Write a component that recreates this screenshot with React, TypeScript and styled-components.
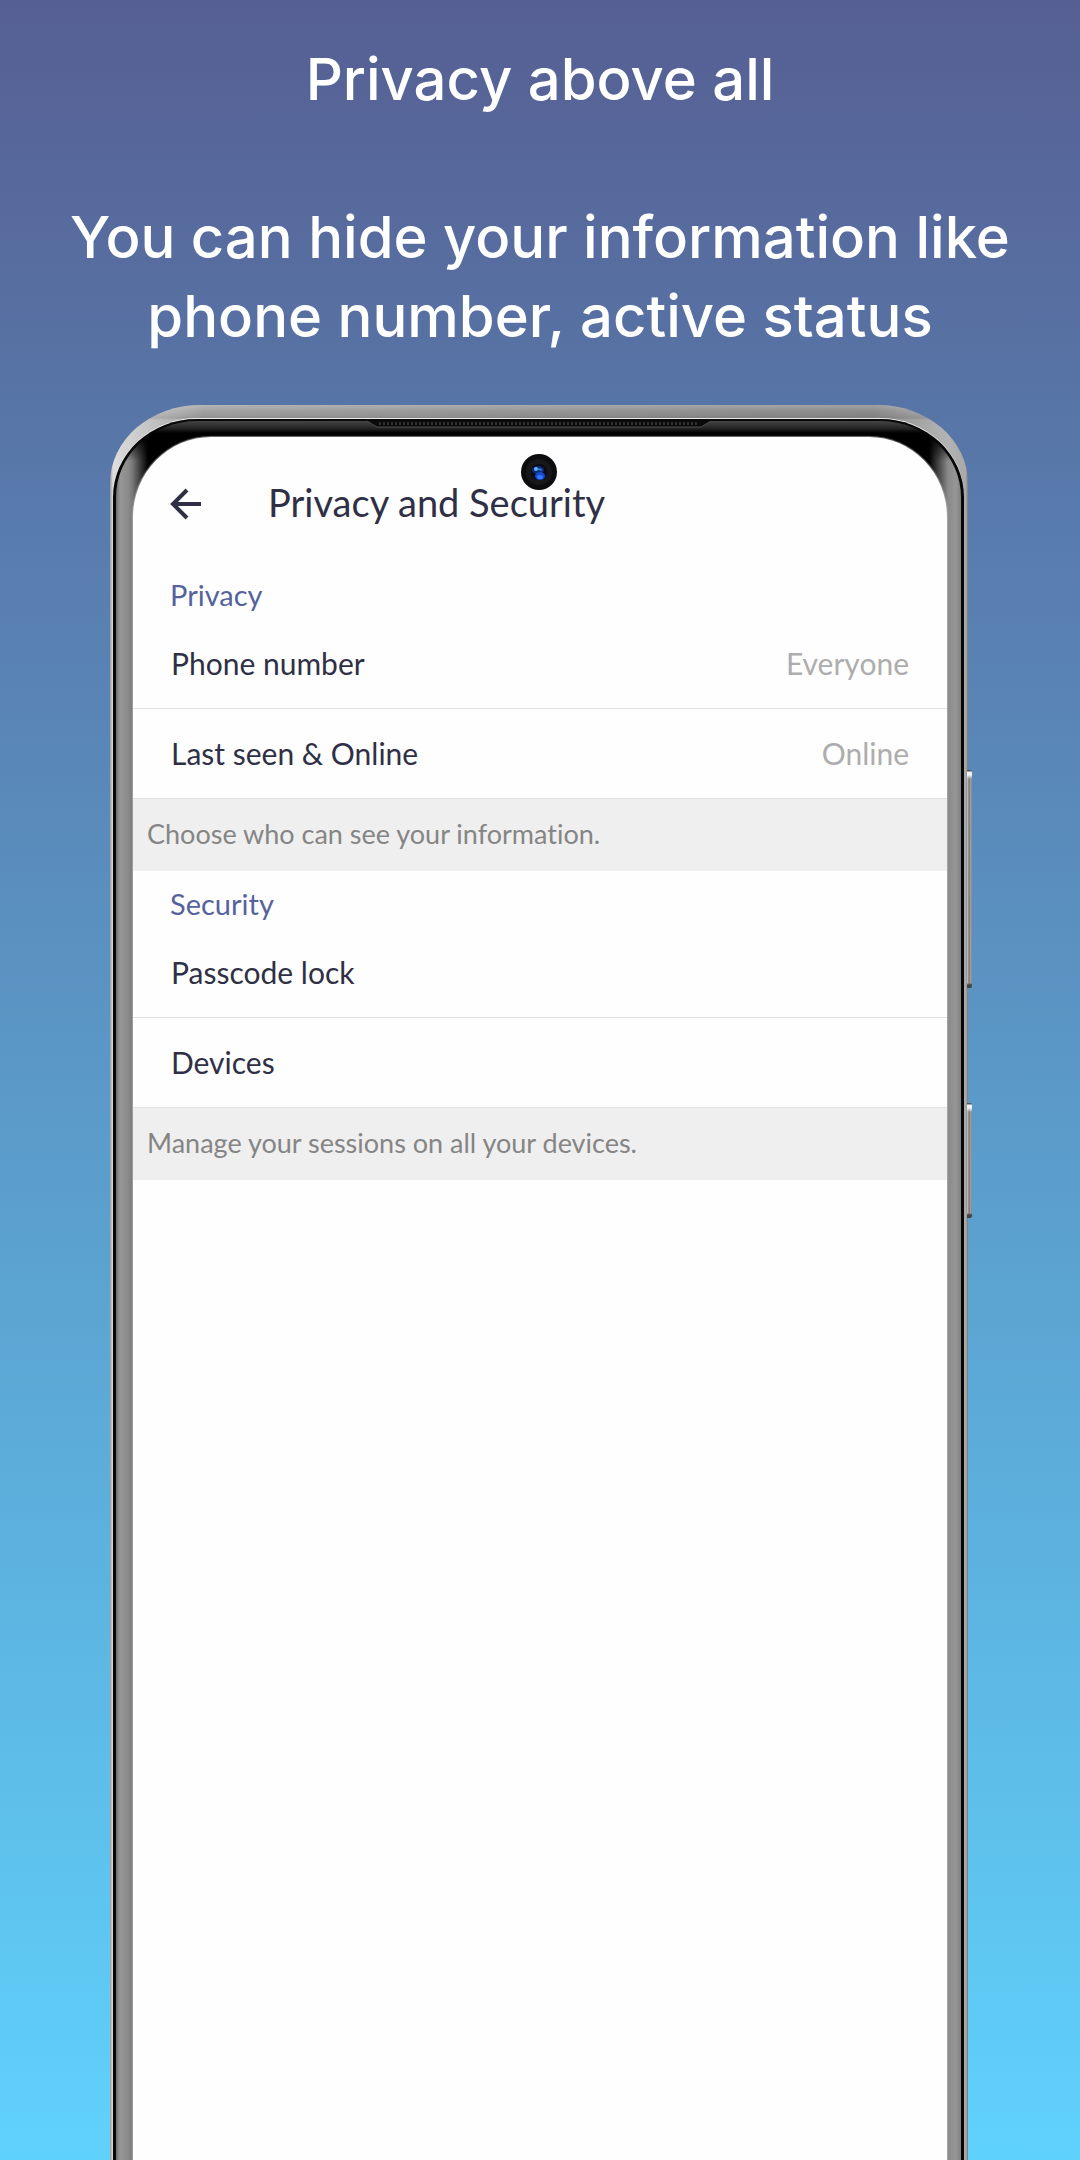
import React from 'react';
import styled, { createGlobalStyle } from 'styled-components';

const GlobalStyle = createGlobalStyle`
  *, *::before, *::after { box-sizing: border-box; }
  body { margin: 0; }
  h1, h2, h3, p { margin: 0; font-weight: 400; }
  button { border: 0; background: none; font: inherit; color: inherit; cursor: pointer; }
`;

const Page = styled.main`
  min-height: 100vh;
  display: flex;
  flex-direction: column;
  overflow: hidden;
  background: linear-gradient(180deg, #565f93 0%, #5fd2fc 100%);
  font-family: Lato, 'Open Sans', sans-serif;
  font-variant-ligatures: none;
`;

const Hero = styled.header`
  display: flex;
  flex-direction: column;
  gap: 79px;
  padding: 40px 40px 49px;
  color: #ffffff;
  font-family: Inter, 'Open Sans', sans-serif;
  font-size: 58px;
  line-height: 79px;
  text-align: center;
`;

const Headline = styled.h1`
  font-size: 58px;
  font-weight: 500;
`;

const Tagline = styled.p`
  font-weight: 500;
`;

const Phone = styled.section`
  position: relative;
  flex: 1;
  display: flex;
  margin: 0 112px 0 110px;
  padding: 14px 4px 0 3px;
  border-radius: 90px 90px 0 0 / 78px 78px 0 0;
  background:
    linear-gradient(180deg, rgba(255, 255, 255, 0.2) 0, transparent 6px, rgba(0, 0, 0, 0.1) 13px, transparent 15px),
    linear-gradient(90deg, #9a9a9a 0, #dedede 3px, #cecece 24px, #a2a2a2 94px, #969696 50%, #8c8c8c calc(100% - 94px), #b4b4b4 calc(100% - 20px), #a8a8a8 calc(100% - 2px), #777777 100%);
`;

const Bezel = styled.div`
  flex: 1;
  display: flex;
  padding: 16px 14px 0 17px;
  border: solid #080808;
  border-width: 2px 3px 0;
  border-radius: 84px 84px 0 0 / 78px 78px 0 0;
  box-shadow: 0 -1px 0 #e9e9e9;
  background:
    linear-gradient(180deg, #444444 0, #262626 7px, #000000 12px, rgba(0, 0, 0, 0.7) 20px, transparent 40px),
    linear-gradient(90deg, #6e6e6e 0, #979797 4px, #8b8b8b 12px, #7b7b7b 16px, #000000 32px, #000000 calc(100% - 32px), #8a8a8a calc(100% - 13px), #969696 calc(100% - 5px), #808080 100%);
`;

const Screen = styled.div`
  flex: 1;
  min-width: 0;
  border-radius: 78px 78px 0 0 / 80px 80px 0 0;
  background: #fefefe;
  box-shadow: 0 0 1px 1px rgba(190, 190, 190, 0.6);
`;

const Speaker = styled.svg`
  position: absolute;
  top: 15px;
  left: 50%;
  width: 344px;
  height: 12px;
  transform: translateX(-50%);
`;

const Camera = styled.svg`
  position: absolute;
  top: 48px;
  left: 50%;
  width: 38px;
  height: 38px;
  transform: translateX(-50%);
`;

const SideKey = styled.span<{ $top: number; $length: number }>`
  position: absolute;
  top: ${(p) => p.$top}px;
  right: -4px;
  width: 5px;
  height: ${(p) => p.$length}px;
  border-radius: 0 2px 2px 0;
  background:
    linear-gradient(180deg, #555555 0, #555555 1px, #f2f2f2 2px, #f2f2f2 5px, transparent 9px, transparent calc(100% - 5px), #444444 calc(100% - 3px), #444444 100%),
    linear-gradient(90deg, #c9c9c9 0, #7b7b7b 2px, #858585 3px, #b5b5b5 4px, #6a6a6a 5px);
`;

const AppBar = styled.header`
  display: flex;
  align-items: center;
  gap: 67px;
  height: 125px;
  padding: 8px 37px 0;
  color: #2f3045;
`;

const BackButton = styled.button`
  display: flex;
  padding: 0;
`;

const Title = styled.h2`
  padding-bottom: 3px;
  font-size: 38px;
  line-height: 46px;
`;

const GroupLabel = styled.h3`
  height: 57px;
  padding: 14px 37px 0;
  color: #56629c;
  font-size: 29px;
  line-height: 38px;
`;

const Row = styled.button`
  display: flex;
  justify-content: space-between;
  align-items: center;
  width: 100%;
  height: 90px;
  padding: 0 38px 2px;
  border-bottom: 1px solid #e2e2e2;
  color: #2f3045;
  font-size: 30px;
  line-height: 38px;
  text-align: left;
`;

const Value = styled.span`
  color: #adadad;
`;

const Note = styled.p`
  padding: 16px 14px 18px;
  background: #efefef;
  color: #858585;
  font-size: 27px;
  line-height: 38px;
`;

type Item = { label: string; value?: string };
type Group = { title: string; items: Item[]; note: string };

const groups: Group[] = [
  {
    title: 'Privacy',
    items: [
      { label: 'Phone number', value: 'Everyone' },
      { label: 'Last seen & Online', value: 'Online' },
    ],
    note: 'Choose who can see your information.',
  },
  {
    title: 'Security',
    items: [{ label: 'Passcode lock' }, { label: 'Devices' }],
    note: 'Manage your sessions on all your devices.',
  },
];

function SpeakerGrille() {
  return (
    <Speaker viewBox="0 0 344 12" aria-hidden="true">
      <path d="M0 1 H344 L334 7 H10 Z" fill="#0b0b0b" />
      <path d="M0 1 L10 7 H334 L344 1" fill="none" stroke="#4c4c4c" strokeWidth="1" />
      <path d="M12 3.5 H332" stroke="#303030" strokeWidth="3" strokeDasharray="2 2" />
    </Speaker>
  );
}

function FrontCamera() {
  return (
    <Camera viewBox="0 0 38 38" aria-hidden="true">
      <circle cx="19" cy="19" r="18" fill="#0c0c0e" />
      <circle cx="19" cy="19" r="13" fill="#171718" />
      <circle cx="19" cy="19" r="8" fill="#090b18" />
      <ellipse cx="18" cy="17" rx="6" ry="4" fill="#0d2c78" />
      <ellipse cx="20" cy="23" rx="5" ry="4" fill="#1748cf" />
      <ellipse cx="20" cy="24" rx="3" ry="2" fill="#2f78ff" />
      <ellipse cx="16" cy="16" rx="2" ry="2" fill="#5cb4f5" />
      <path d="M18 16 L22 17" stroke="#2f74cf" strokeWidth="2" />
    </Camera>
  );
}

export default function App() {
  return (
    <>
      <GlobalStyle />
      <Page>
        <Hero>
          <Headline>Privacy above all</Headline>
          <Tagline>You can hide your information like phone number, active status</Tagline>
        </Hero>
        <Phone>
          <SideKey $top={365} $length={218} />
          <SideKey $top={698} $length={115} />
          <Bezel>
            <Screen>
              <AppBar>
                <BackButton aria-label="Back">
                  <svg width="31" height="32" viewBox="0 0 31 32" fill="none" stroke="currentColor" strokeWidth="4">
                    <path d="M31 16 H3 M17 2 L3 16 L17 30" />
                  </svg>
                </BackButton>
                <Title>Privacy and Security</Title>
              </AppBar>
              {groups.map((group) => (
                <section key={group.title}>
                  <GroupLabel>{group.title}</GroupLabel>
                  {group.items.map((item) => (
                    <Row key={item.label}>
                      <span>{item.label}</span>
                      {item.value && <Value>{item.value}</Value>}
                    </Row>
                  ))}
                  <Note>{group.note}</Note>
                </section>
              ))}
            </Screen>
          </Bezel>
          <SpeakerGrille />
          <FrontCamera />
        </Phone>
      </Page>
    </>
  );
}
